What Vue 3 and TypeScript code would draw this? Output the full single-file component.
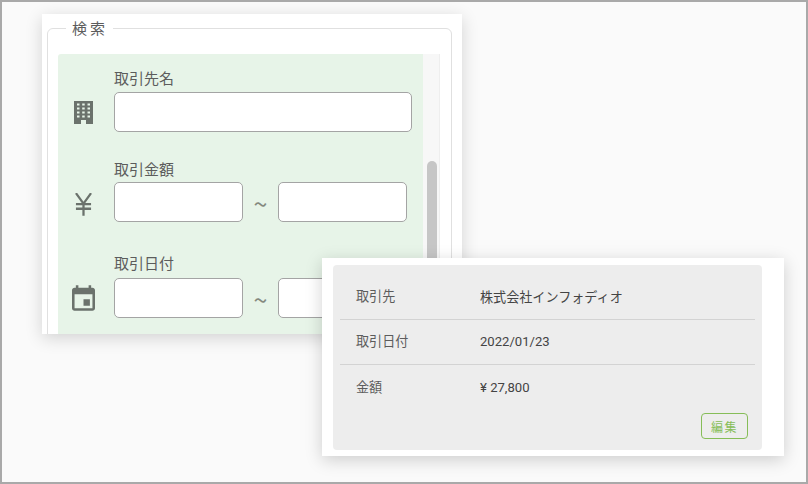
<script setup lang="ts">
const details = [
  { label: '取引先', value: '株式会社インフォディオ' },
  { label: '取引日付', value: '2022/01/23' },
  { label: '金額', value: '¥ 27,800' },
]
</script>

<template>
  <div class="page">
    <section class="search-card">
      <fieldset class="search-box">
        <legend>検索</legend>
        <div class="scroller">
          <div class="form">
            <div class="group group-name">
              <label>取引先名</label>
              <div class="line">
                <svg class="icon building" viewBox="0 0 19 23" aria-hidden="true">
                  <path fill="#6b726c" fill-rule="evenodd" d="M0 0h19v23H12v-4H7v4H0zM3 2.5v2h2.5v-2zM8.2 2.5v2h2.5v-2zM13.5 2.5v2H16v-2zM3 6.5v2h2.5v-2zM8.2 6.5v2h2.5v-2zM13.5 6.5v2H16v-2zM3 10.5v2h2.5v-2zM8.2 10.5v2h2.5v-2zM13.5 10.5v2H16v-2zM3 14.5v2h2.5v-2zM8.2 14.5v2h2.5v-2zM13.5 14.5v2H16v-2z" />
                </svg>
                <input class="input wide" type="text" />
              </div>
            </div>
            <div class="group group-amount">
              <label>取引金額</label>
              <div class="line">
                <svg class="icon yen" viewBox="0 0 18 24" aria-hidden="true">
                  <path fill="none" stroke="#6b726c" stroke-width="2.4" d="M1 0l8 11 8-11M1 11.5h16M1 16.5h16M9 11v13" />
                </svg>
                <input class="input" type="text" />
                <span class="tilde">~</span>
                <input class="input" type="text" />
              </div>
            </div>
            <div class="group group-date">
              <label>取引日付</label>
              <div class="line">
                <svg class="icon calendar" viewBox="3 1 18 20" aria-hidden="true">
                  <path fill="#6b726c" d="M17 12h-5v5h5v-5zM16 1v2H8V1H6v2H5c-1.11 0-1.99.9-1.99 2L3 19c0 1.1.89 2 2 2h14c1.1 0 2-.9 2-2V5c0-1.1-.9-2-2-2h-1V1h-2zm3 18H5V8h14v11z" />
                </svg>
                <input class="input" type="text" />
                <span class="tilde">~</span>
                <input class="input" type="text" />
              </div>
            </div>
          </div>
          <div class="track"><div class="thumb"></div></div>
        </div>
      </fieldset>
    </section>

    <section class="detail-card">
      <div class="detail-panel">
        <div v-for="row in details" :key="row.label" class="detail-row">
          <span class="detail-label">{{ row.label }}</span>
          <span class="detail-value">{{ row.value }}</span>
        </div>
        <div class="actions">
          <button class="edit" type="button">編集</button>
        </div>
      </div>
    </section>
  </div>
</template>

<style>
html, body { margin: 0; padding: 0; }
</style>

<style scoped>
.page {
  box-sizing: border-box;
  position: relative;
  width: 808px;
  height: 484px;
  overflow: hidden;
  padding: 12px 0 0 40px;
  background: #fafafa;
  border: 2px solid #a9a9a9;
  font-family: "Noto Sans CJK JP", sans-serif;
  color: #5c5c5c;
}
.search-card {
  box-sizing: border-box;
  width: 420px;
  height: 320px;
  overflow: hidden;
  padding: 0 10px 0 5px;
  background: #fff;
  box-shadow: 0 4px 16px rgba(0, 0, 0, 0.16);
}
.search-box {
  box-sizing: border-box;
  height: 360px;
  margin: 4px 0 0;
  padding: 16px 11px 0 10px;
  min-width: 0;
  border: 1px solid #e0e0e0;
  border-radius: 6px;
}
.search-box legend {
  margin-left: 8px;
  padding: 0 5px 0 6px;
  font-size: 15px;
  line-height: 20px;
  letter-spacing: 3px;
  color: #5c5c5c;
}
.scroller {
  display: flex;
  height: 300px;
}
.form {
  box-sizing: border-box;
  width: 365px;
  height: 300px;
  padding-left: 16px;
  background: #e7f4e8;
  border-radius: 3px 0 0 0;
}
.group label {
  display: block;
  margin-left: 40px;
  font-size: 15px;
  line-height: 20px;
  color: #5c5c5c;
}
.group-name { padding-top: 14px; }
.group-name label { margin-bottom: 4px; }
.group-amount { padding-top: 27px; }
.group-amount label { margin-bottom: 3px; }
.group-date { padding-top: 31px; }
.group-date label { margin-bottom: 5px; }
.line {
  display: flex;
  align-items: center;
  height: 40px;
}
.icon {
  flex: none;
  display: block;
}
.building { width: 19px; height: 23px; margin: 0 21px 0 0; }
.yen { width: 17px; height: 23px; margin: 4px 22px 0 1px; }
.calendar { width: 23px; height: 26px; margin: 0 19px 0 -2px; }
.input {
  box-sizing: border-box;
  display: block;
  width: 129px;
  height: 40px;
  margin: 0;
  padding: 0;
  background: #fff;
  border: 1px solid #a4a4a4;
  border-radius: 5px;
  outline: none;
}
.input.wide { width: 298px; }
.tilde {
  box-sizing: border-box;
  width: 35px;
  height: 40px;
  padding-top: 1px;
  text-align: center;
  font-size: 25px;
  line-height: 40px;
  color: #85897f;
}
.track {
  box-sizing: border-box;
  width: 17px;
  height: 300px;
  padding: 107px 3px 0 4px;
  background: #f7f7f7;
  border-right: 1px solid #eee;
}
.thumb {
  width: 10px;
  height: 200px;
  border-radius: 5px;
  background: #c6c6c6;
}
.detail-card {
  position: absolute;
  left: 320px;
  top: 256px;
  box-sizing: border-box;
  width: 462px;
  height: 198px;
  padding: 7px 22px 6px 11px;
  background: #fff;
  box-shadow: 0 4px 16px rgba(0, 0, 0, 0.18);
}
.detail-panel {
  box-sizing: border-box;
  height: 185px;
  padding: 10px 7px 0;
  background: #ededed;
  border-radius: 4px;
}
.detail-row {
  display: flex;
  align-items: center;
  box-sizing: border-box;
  height: 45px;
  padding: 0 0 2px 16px;
  font-size: 13.1px;
  border-bottom: 1px solid #d3d3d3;
}
.detail-row:nth-child(3) {
  border-bottom: 0;
  padding-bottom: 0;
}
.detail-label {
  width: 124px;
  padding-bottom: 2px;
  color: #5c5c5c;
}
.detail-value {
  color: #444;
  font-family: Roboto, "Noto Sans CJK JP", sans-serif;
}
.actions {
  display: flex;
  justify-content: flex-end;
  padding: 3px 7px 0 0;
}
.edit {
  box-sizing: border-box;
  width: 47px;
  height: 26px;
  margin: 0;
  padding: 0;
  background: transparent;
  border: 1px solid #86bd58;
  border-radius: 4px;
  font-family: "Noto Sans CJK JP", sans-serif;
  font-size: 12px;
  letter-spacing: 1.5px;
  color: #86bd58;
}
</style>
